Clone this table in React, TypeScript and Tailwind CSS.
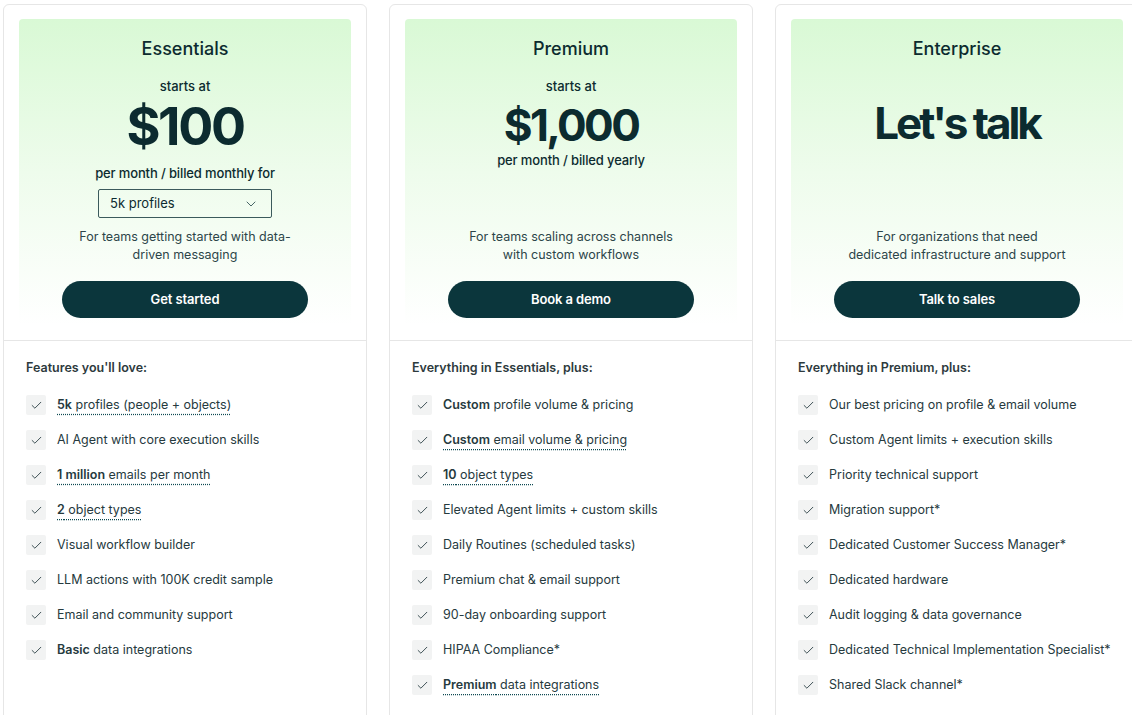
import { Check, ChevronDown } from "lucide-react";
import type { ReactNode } from "react";

type Feature = { content: ReactNode; dotted?: boolean };

const FONT = { fontFamily: "Inter, 'Noto Sans', sans-serif" };

const PLANS: {
    name: string;
    headline: ReactNode;
    description: [string, string];
    cta: string;
    featuresTitle: string;
    features: Feature[];
}[] = [
    {
        name: "Essentials",
        headline: (
            <>
                <div className="mt-[16px] text-[13px] leading-[18px] font-medium">starts at</div>
                <div className="mt-[6px] text-[52px] leading-none font-bold tracking-[-0.045em]">$100</div>
                <div className="mt-[11px] text-[13px] leading-[18px] font-medium tracking-[-0.01em]">per month / billed monthly for</div>
                <button className="mt-[7px] w-[174px] h-[29px] border border-[#3b5a5c] rounded-[2px] flex items-center justify-between pl-[11px] pr-[12px] text-[13px] text-[#0c2b2f]">
                    5k profiles
                    <ChevronDown className="w-[16px] h-[16px] text-[#3b5a5c]" strokeWidth={1.4} />
                </button>
            </>
        ),
        description: ["For teams getting started with data-", "driven messaging"],
        cta: "Get started",
        featuresTitle: "Features you'll love:",
        features: [
            { content: <><b className="font-semibold">5k</b> profiles (people + objects)</>, dotted: true },
            { content: "AI Agent with core execution skills" },
            { content: <><b className="font-semibold">1 million</b> emails per month</>, dotted: true },
            { content: <><b className="font-semibold">2</b> object types</>, dotted: true },
            { content: "Visual workflow builder" },
            { content: "LLM actions with 100K credit sample" },
            { content: "Email and community support" },
            { content: <><b className="font-semibold">Basic</b> data integrations</> },
        ],
    },
    {
        name: "Premium",
        headline: (
            <>
                <div className="mt-[16px] text-[13px] leading-[18px] font-medium">starts at</div>
                <div className="mt-[8px] text-[44px] leading-none font-bold tracking-[-0.06em]">$1,000</div>
                <div className="mt-[4px] text-[13px] leading-[18px] font-medium tracking-[-0.01em]">per month / billed yearly</div>
            </>
        ),
        description: ["For teams scaling across channels", "with custom workflows"],
        cta: "Book a demo",
        featuresTitle: "Everything in Essentials, plus:",
        features: [
            { content: <><b className="font-semibold">Custom</b> profile volume &amp; pricing</> },
            { content: <><b className="font-semibold">Custom</b> email volume &amp; pricing</>, dotted: true },
            { content: <><b className="font-semibold">10</b> object types</>, dotted: true },
            { content: "Elevated Agent limits + custom skills" },
            { content: "Daily Routines (scheduled tasks)" },
            { content: "Premium chat & email support" },
            { content: "90-day onboarding support" },
            { content: "HIPAA Compliance*" },
            { content: <><b className="font-semibold">Premium</b> data integrations</>, dotted: true },
        ],
    },
    {
        name: "Enterprise",
        headline: (
            <div className="mt-[40px] text-[44px] leading-none font-bold tracking-[-0.07em]">Let's talk</div>
        ),
        description: ["For organizations that need", "dedicated infrastructure and support"],
        cta: "Talk to sales",
        featuresTitle: "Everything in Premium, plus:",
        features: [
            { content: "Our best pricing on profile & email volume" },
            { content: "Custom Agent limits + execution skills" },
            { content: "Priority technical support" },
            { content: "Migration support*" },
            { content: "Dedicated Customer Success Manager*" },
            { content: "Dedicated hardware" },
            { content: "Audit logging & data governance" },
            { content: "Dedicated Technical Implementation Specialist*" },
            { content: "Shared Slack channel*" },
        ],
    },
];

export default function App() {
    return (
        <div className="w-[1132px] h-[715px] overflow-hidden bg-white text-[#0c2b2f]" style={FONT}>
            <div className="flex gap-[22px] pl-[3px] pt-[4px]">
                {PLANS.map((plan) => (
                    <div key={plan.name} className="w-[364px] shrink-0 h-[740px] border border-[#e6e6e6] rounded-[6px]">
                        {/* Header */}
                        <div className="px-[15px] pt-[14px] pb-[15px] border-b border-[#e6e6e6]">
                            <div className="h-[306px] rounded-t-[4px] bg-gradient-to-b from-[#d9f9d5] via-[#eefcec] to-white flex flex-col items-center text-center pt-[18px]">
                                <h3 className="text-[18px] leading-[24px] font-medium">{plan.name}</h3>
                                {plan.headline}
                                <div className="mt-auto text-[12.5px] leading-[18px] text-[#2c4549]">
                                    <div>{plan.description[0]}</div>
                                    <div>{plan.description[1]}</div>
                                </div>
                                <button className="mt-[17px] mb-[7px] w-[246px] h-[37px] rounded-full bg-[#0b363c] text-white text-[13px] font-semibold tracking-[-0.01em]">
                                    {plan.cta}
                                </button>
                            </div>
                        </div>

                        {/* Features */}
                        <div className="px-[22px] pt-[18px]">
                            <div className="text-[12.5px] leading-[18px] font-semibold text-[#2d3a3d]">{plan.featuresTitle}</div>
                            <ul className="mt-[18px] flex flex-col gap-[15px]">
                                {plan.features.map((f, i) => (
                                    <li key={i} className="flex items-center h-5">
                                        <span className="w-5 h-5 rounded-[2px] bg-[#f2f3f3] flex items-center justify-center shrink-0">
                                            <Check className="w-[13px] h-[13px] text-[#24393d]" strokeWidth={1.6} />
                                        </span>
                                        <span
                                            className={
                                                "ml-[11px] text-[12.5px] leading-[18px] text-[#263a3e] whitespace-nowrap " +
                                                (f.dotted ? "underline decoration-dotted decoration-[#0f4a52] underline-offset-[5px]" : "")
                                            }
                                        >
                                            {f.content}
                                        </span>
                                    </li>
                                ))}
                            </ul>
                        </div>
                    </div>
                ))}
            </div>
        </div>
    );
}
